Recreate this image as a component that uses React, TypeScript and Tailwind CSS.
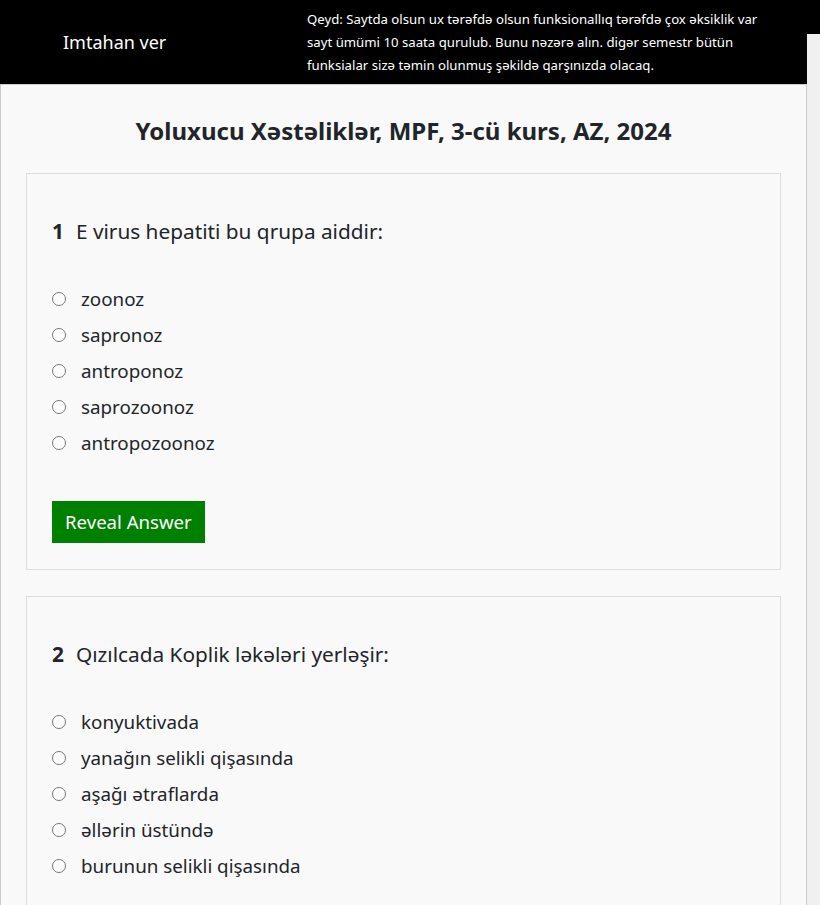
const questions = [
  {
    id: 1,
    text: "E virus hepatiti bu qrupa aiddir:",
    options: ["zoonoz", "sapronoz", "antroponoz", "saprozoonoz", "antropozoonoz"],
  },
  {
    id: 2,
    text: "Qızılcada Koplik ləkələri yerləşir:",
    options: [
      "konyuktivada",
      "yanağın selikli qişasında",
      "aşağı ətraflarda",
      "əllərin üstündə",
      "burunun selikli qişasında",
    ],
  },
];

const QuestionCard = ({ q }: { q: (typeof questions)[number] }) => {
  return (
    <div className="border border-[#dddddd] bg-[#f9f9f9] px-[25px] pt-[42px] pb-[26px]">
      <h3 className="text-[20.8px] leading-[30px] text-[#212529]">
        <span className="font-bold">{q.id}</span>
        <span className="ml-[12px]">{q.text}</span>
      </h3>
      <div className="mt-[35px] flex flex-col">
        {q.options.map((o) => (
          <label key={o} className="flex h-[36px] items-center">
            <span className="mr-[15px] h-[14px] w-[14px] rounded-full border border-[#767676] bg-white" />
            <span className="text-[18.8px] text-[#212529]">{o}</span>
          </label>
        ))}
      </div>
      <button className="mt-[40px] h-[42px] bg-[#008000] px-[13px] text-[18.6px] text-white">
        Reveal Answer
      </button>
    </div>
  );
};

const App = () => {
  return (
    <div className="flex min-h-screen bg-[#f0f0f0] font-['Noto_Sans',sans-serif]">
      <div className="flex w-[807px] flex-col">
        <header className="flex h-[84px] items-center bg-black">
          <div className="w-[307px] pl-[63px] text-[18px] text-white">Imtahan ver</div>
          <p className="w-[460px] text-[13.2px] leading-[23px] text-white">
            Qeyd: Saytda olsun ux tərəfdə olsun funksionallıq tərəfdə çox əksiklik var sayt ümümi 10 saata qurulub. Bunu nəzərə alın. digər semestr bütün funksialar sizə təmin olunmuş şəkildə qarşınızda olacaq.
          </p>
        </header>
        <main className="flex-1 border border-[#cccccc] bg-[#f9f9f9] px-[25px]">
          <h1 className="pt-[30px] pb-[26px] text-center text-[24px] leading-[32px] font-bold text-[#212529]">
            Yoluxucu Xəstəliklər, MPF, 3-cü kurs, AZ, 2024
          </h1>
          <div className="flex flex-col gap-[26px]">
            {questions.map((q) => (
              <QuestionCard key={q.id} q={q} />
            ))}
          </div>
        </main>
      </div>
      <div className="flex-1">
        <div className="h-[34px] bg-black" />
      </div>
    </div>
  );
};

export default App;
